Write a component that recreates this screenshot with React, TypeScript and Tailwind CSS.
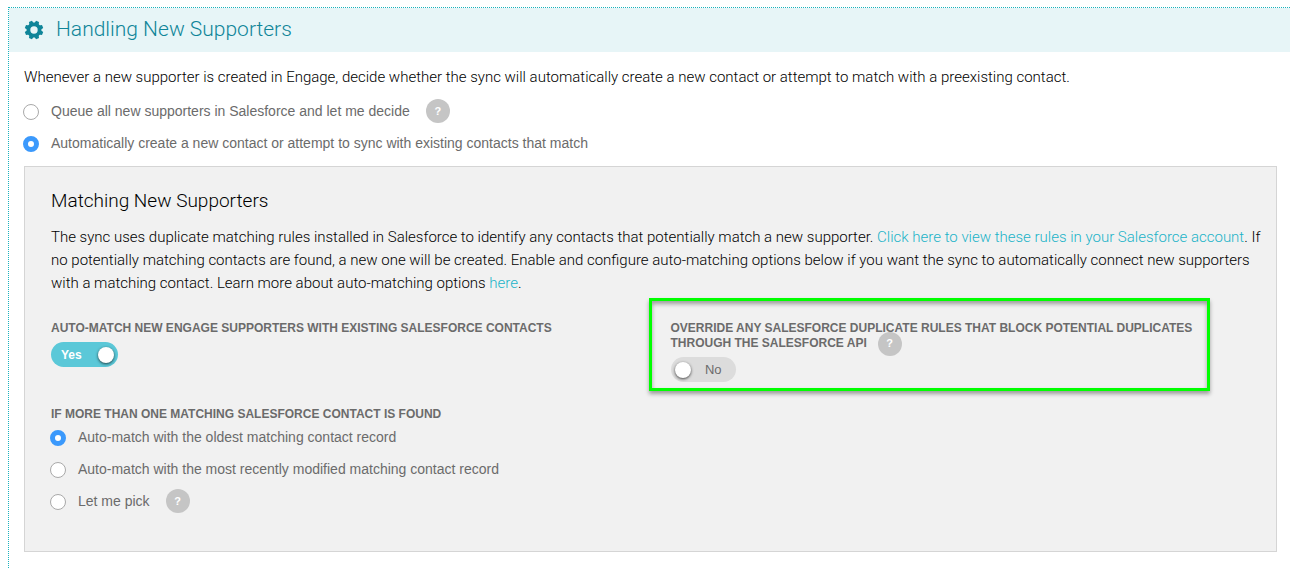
import { useState } from "react";
import type { ReactNode } from "react";

const GearIcon = () => (
  <svg viewBox="-10 -10 20 20" className="size-5 text-[#0f8599]" fill="currentColor">
    <path
      fillRule="evenodd"
      d="M-7.4 0a7.4 7.4 0 1 0 14.8 0a7.4 7.4 0 1 0-14.8 0zM-3.7 0a3.7 3.7 0 1 1 7.4 0a3.7 3.7 0 1 1-7.4 0z"
    />
    {[22.5, 67.5, 112.5, 157.5, 202.5, 247.5, 292.5, 337.5].map((angle) => (
      <path key={angle} d="M-2.4-6L-1.6-9.3H1.6L2.4-6z" transform={`rotate(${angle})`} />
    ))}
  </svg>
);

const Help = ({ className = "" }: { className?: string }) => (
  <button
    type="button"
    className={`inline-flex size-6 shrink-0 items-center justify-center rounded-full bg-[#c5c5c5] text-[11px] font-bold text-white ${className}`}
  >
    ?
  </button>
);

type RadioProps = {
  id: string;
  name: string;
  checked: boolean;
  onChange: () => void;
  children: ReactNode;
};

const Radio = ({ id, name, checked, onChange, children }: RadioProps) => (
  <>
    <input
      type="radio"
      id={id}
      name={name}
      checked={checked}
      onChange={onChange}
      className="-ml-px size-4 shrink-0 appearance-none rounded-full border border-[#a9a9a9] bg-white checked:border-[5px] checked:border-[#3b99fc]"
    />
    <label htmlFor={id} className="pb-0.5 text-sm text-[#6b6b6b]">
      {children}
    </label>
  </>
);

type ToggleProps = {
  labelId: string;
  on: boolean;
  onClick: () => void;
};

const Toggle = ({ labelId, on, onClick }: ToggleProps) => (
  <button
    type="button"
    role="switch"
    aria-checked={on}
    aria-labelledby={labelId}
    onClick={onClick}
    className={`mt-1.5 flex h-[25px] items-center justify-between rounded-full ${
      on
        ? "w-[67px] bg-[#5bc8d8] pr-1 pl-2.5 text-xs font-bold text-white"
        : "w-[65px] flex-row-reverse bg-[#dcdcdc] pr-3.5 pl-1 text-[13px] text-[#6b6b6b]"
    }`}
  >
    <span>{on ? "Yes" : "No"}</span>
    <span className="size-4 rounded-full bg-white shadow-[0_1px_3px_rgba(0,0,0,0.7)]" />
  </button>
);

const App = () => {
  const [mode, setMode] = useState("auto");
  const [match, setMatch] = useState("oldest");
  const [autoMatch, setAutoMatch] = useState(true);
  const [override, setOverride] = useState(false);

  return (
    <main className="bg-white pt-[7px] pl-2 font-['Liberation_Sans',Arial,sans-serif] text-[15px]">
      <section className="border-t border-l border-dotted border-[#1ab3bd] pb-4">
        <header className="flex h-11 items-center gap-3 bg-[#e7f5f7] pl-[15px]">
          <GearIcon />
          <h1 className="font-['Roboto',sans-serif] text-[21px] font-light text-[#0f8599]">
            Handling New Supporters
          </h1>
        </header>

        <div className="pt-3.5 pr-[13px] pl-[15px]">
          <p className="font-['Roboto',sans-serif] leading-[23px] font-light text-black">
            Whenever a new supporter is created in Engage, decide whether the sync will
            automatically create a new contact or attempt to match with a preexisting contact.
          </p>

          <div className="mt-[7px] flex h-8 items-center">
            <div className="flex items-center gap-3">
              <Radio
                id="mode-queue"
                name="mode"
                checked={mode === "queue"}
                onChange={() => setMode("queue")}
              >
                Queue all new supporters in Salesforce and let me decide
              </Radio>
            </div>
            <Help className="mb-0.5 ml-4" />
          </div>
          <div className="flex h-8 items-center gap-3">
            <Radio
              id="mode-auto"
              name="mode"
              checked={mode === "auto"}
              onChange={() => setMode("auto")}
            >
              Automatically create a new contact or attempt to sync with existing contacts that
              match
            </Radio>
          </div>

          <div className="mt-1.5 border border-[#d5d5d5] bg-[#f1f1f1] px-[26px] pt-5 pb-[33px]">
            <h2 className="font-['Roboto',sans-serif] text-[19px] leading-7 font-light text-black">
              Matching New Supporters
            </h2>
            <p className="-mr-4 mt-[11px] font-['Roboto',sans-serif] leading-[23px] font-light text-black">
              The sync uses duplicate matching rules installed in Salesforce to identify any
              contacts that potentially match a new supporter.{" "}
              <a href="#rules" className="text-[#1ab3c8]">
                Click here to view these rules in your Salesforce account
              </a>
              . If no potentially matching contacts are found, a new one will be created. Enable
              and configure auto-matching options below if you want the sync to automatically
              connect new supporters with a matching contact. Learn more about auto-matching
              options{" "}
              <a href="#learn-more" className="text-[#1ab3c8]">
                here
              </a>
              .
            </p>

            <div className="mt-[26px] grid grid-cols-2 gap-10">
              <div>
                <h3
                  id="auto-match-label"
                  className="text-xs leading-[15px] font-bold text-[#6b6b6b] uppercase"
                >
                  Auto-match new Engage supporters with existing Salesforce contacts
                </h3>
                <Toggle
                  labelId="auto-match-label"
                  on={autoMatch}
                  onClick={() => setAutoMatch(!autoMatch)}
                />
              </div>
              <div className="relative mr-10">
                <h3 className="text-xs leading-[15px] font-bold text-[#6b6b6b] uppercase">
                  <span id="override-label">
                    Override any Salesforce duplicate rules that block potential duplicates
                    through the Salesforce API
                  </span>
                  <Help className="-my-2 ml-[11px] align-middle" />
                </h3>
                <Toggle
                  labelId="override-label"
                  on={override}
                  onClick={() => setOverride(!override)}
                />
                <div className="pointer-events-none absolute -top-[23px] right-0 -bottom-[9px] -left-[22px] border-3 border-[#00ff00] shadow-[0_3px_4px_rgba(0,0,0,0.35),inset_0_3px_4px_rgba(0,0,0,0.35)]" />
              </div>
            </div>

            <h3 className="mt-[25px] text-xs leading-[15px] font-bold text-[#6b6b6b] uppercase">
              If more than one matching Salesforce contact is found
            </h3>
            <div className="flex h-8 items-center gap-3">
              <Radio
                id="match-oldest"
                name="match"
                checked={match === "oldest"}
                onChange={() => setMatch("oldest")}
              >
                Auto-match with the oldest matching contact record
              </Radio>
            </div>
            <div className="flex h-8 items-center gap-3">
              <Radio
                id="match-recent"
                name="match"
                checked={match === "recent"}
                onChange={() => setMatch("recent")}
              >
                Auto-match with the most recently modified matching contact record
              </Radio>
            </div>
            <div className="flex h-8 items-center">
              <div className="flex items-center gap-3">
                <Radio
                  id="match-pick"
                  name="match"
                  checked={match === "pick"}
                  onChange={() => setMatch("pick")}
                >
                  Let me pick
                </Radio>
              </div>
              <Help className="mb-0.5 ml-4" />
            </div>
          </div>
        </div>
      </section>
    </main>
  );
};

export default App;
